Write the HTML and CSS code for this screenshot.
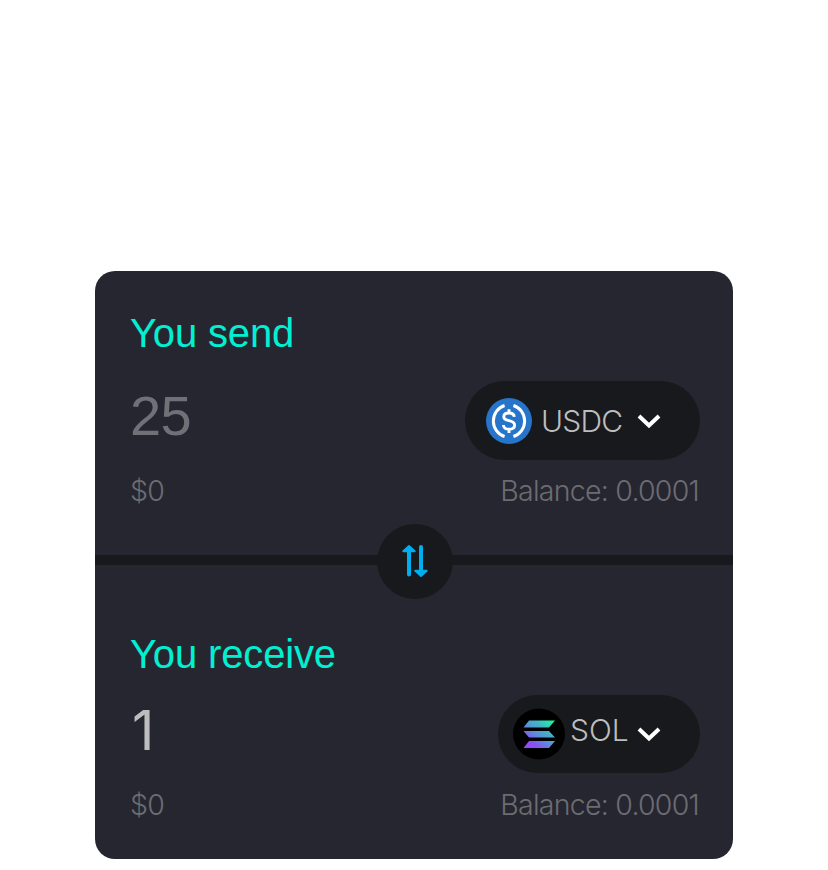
FILE: index.html
```html
<!DOCTYPE html>
<html lang="en">
<head>
<meta charset="utf-8">
<title>Swap</title>
<link rel="stylesheet" href="styles.css">
</head>
<body>
<main class="card">
  <section class="panel send">
    <h2 class="title">You send</h2>
    <div class="row">
      <span class="amount muted">25</span>
      <button class="token usdc">
        <svg class="coin" width="46" height="46" viewBox="0 0 46 46" fill="none" stroke="#fff">
          <circle cx="23" cy="23" r="23" fill="#2775ca" stroke="none"/>
          <path d="M18.6 7.5A16.3 16.3 0 0 0 18.6 38.5M27.4 7.5A16.3 16.3 0 0 1 27.4 38.5" stroke-width="3"/>
          <path d="M28.3 18.8C28 16.2 26 15 23 15C19.8 15 17.8 16.4 17.8 18.7C17.8 21.3 20 22.1 23 22.7C26.5 23.4 28.6 24.5 28.6 27.2C28.6 29.7 26.4 31.2 23 31.2C19.6 31.2 17.6 29.7 17.4 27M23 11.3V15M23 31.2V35" stroke-width="2.9"/>
        </svg>
        <span class="symbol">USDC</span>
        <svg class="chevron" width="24" height="16" viewBox="0 0 24 16"><path d="M2 3L12 12.5L22 3" fill="none" stroke="#fff" stroke-width="4"/></svg>
      </button>
    </div>
    <div class="meta"><span class="fiat">$0</span><span class="balance">Balance: 0.0001</span></div>
  </section>
  <button class="swap" aria-label="Switch tokens">
    <svg width="28" height="34" viewBox="0 0 28 34" fill="#00aeef" stroke="#00aeef" stroke-linecap="round" stroke-linejoin="round">
      <path d="M8 5V30.5M20 3V28" stroke-width="4"/>
      <path d="M2.3 7.2L8 2L13.7 7.2ZM14.3 26.8L20 32L25.7 26.8Z" stroke-width="2"/>
    </svg>
  </button>
  <section class="panel receive">
    <h2 class="title">You receive</h2>
    <div class="row">
      <span class="amount one">1</span>
      <button class="token sol">
        <svg class="coin" width="52" height="52" viewBox="0 0 52 52">
          <defs><linearGradient id="solana" gradientUnits="userSpaceOnUse" x1="14" y1="41" x2="38" y2="11"><stop offset="0" stop-color="#9945ff"/><stop offset=".22" stop-color="#8752f3"/><stop offset=".5" stop-color="#5497d5"/><stop offset=".7" stop-color="#43b4ca"/><stop offset="1" stop-color="#19fb9b"/></linearGradient></defs>
          <ellipse cx="26" cy="26" rx="26" ry="25.5"/>
          <path d="M16 12.5H42L36 19.5H10.5ZM10.5 23H36L42 29.5H16ZM16 33H42L36 40H10.5Z" fill="url(#solana)"/>
        </svg>
        <span class="symbol">SOL</span>
        <svg class="chevron" width="24" height="16" viewBox="0 0 24 16"><path d="M2 3L12 12.5L22 3" fill="none" stroke="#fff" stroke-width="4"/></svg>
      </button>
    </div>
    <div class="meta"><span class="fiat">$0</span><span class="balance">Balance: 0.0001</span></div>
  </section>
</main>
</body>
</html>
```
FILE: styles.css
```css
* { box-sizing: border-box; }
body { margin: 0; background: #fff; font-family: Inter, "Liberation Sans", sans-serif; }
button { border: 0; padding: 0; font: inherit; color: inherit; text-align: left; }
.card { position: relative; width: 638px; height: 588px; margin: 271px 0 0 95px; border-radius: 20px; background: #262631; overflow: hidden; }
.panel { padding: 42px 33px 0 35px; }
.send { height: 294px; border-bottom: 10px solid #18191c; }
.receive { padding-top: 69px; }
.title { margin: 0; font: 400 40px/40px "Liberation Sans", sans-serif; letter-spacing: -0.15px; color: #00f0d1; white-space: nowrap; }
.row { display: flex; justify-content: space-between; height: 79px; margin-top: 28px; }
.receive .row { margin-top: 21px; }
.amount { padding-bottom: 10px; font: 400 56px/69px "Liberation Sans", sans-serif; letter-spacing: -0.6px; color: #bdbdbd; }
.amount.muted { color: #707077; }
.amount.one { padding-left: 2px; font-family: Inter, sans-serif; font-size: 55px; line-height: 71px; }
.token { display: flex; align-items: center; height: 79px; border-radius: 40px; background: #18191c; color: #bdbdbd; }
.usdc { width: 235px; padding-left: 21px; }
.sol { width: 202px; height: 78px; padding-left: 15px; }
.coin, .chevron { display: block; flex: none; }
.symbol { font-size: 30px; font-weight: 275; line-height: 36px; letter-spacing: -0.8px; white-space: nowrap; }
.usdc .symbol { width: 84px; margin: 0 11px 0 9px; padding-left: 0; }
.usdc .chevron { margin-left: 1px; }
.sol .symbol { width: 61px; margin: 0 6px 8px 5px; letter-spacing: 0; }
.meta { display: flex; justify-content: space-between; margin-top: 16px; font-size: 28.5px; font-weight: 300; line-height: 30px; letter-spacing: -0.75px; color: #6c6c71; }
.balance { margin-right: 1px; }
.swap { position: absolute; left: 282px; top: 253px; width: 76px; height: 75px; display: flex; align-items: center; justify-content: center; padding-bottom: 2px; border-radius: 50%; background: #18191c; }
```
